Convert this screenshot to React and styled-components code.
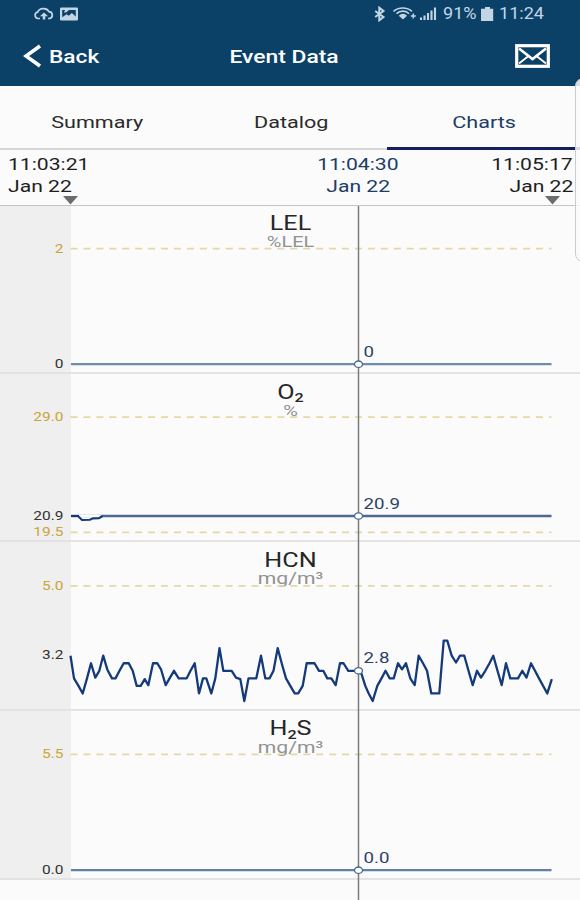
import styled, { createGlobalStyle } from 'styled-components';

const GlobalStyle = createGlobalStyle`
  * {
    box-sizing: border-box;
  }

  body {
    margin: 0;
    background-color: #fbfbfb;
    font-family: Roboto, "Liberation Sans", sans-serif;
  }
`;

const STRETCH = 1.29;
const PLOT_LEFT = 71;
const PLOT_RIGHT = 551.5;
const CURSOR_X = 358.5;

const Screen = styled.div`
  position: relative;
  width: 580px;
  height: 900px;
  overflow: hidden;
  display: flex;
  flex-direction: column;
`;

const StatusBar = styled.div`
  display: flex;
  align-items: center;
  justify-content: space-between;
  height: 28px;
  padding: 0 35px 0 33px;
  background-color: #0b4167;
  color: #c3d5e4;
`;

const StatusGroup = styled.div`
  display: flex;
  align-items: center;
`;

const StatusText = styled.span`
  display: inline-block;
  width: ${(props) => props.$width}px;
  font-size: 16px;
  line-height: 28px;
  white-space: nowrap;
  transform: scaleX(1.13);
  transform-origin: left center;
`;

const Header = styled.header`
  display: grid;
  grid-template-columns: 1fr auto 1fr;
  align-items: center;
  height: 58px;
  padding: 0 30px 2px 23px;
  background-color: #0b4167;
  color: #fff;
`;

const BackButton = styled.button`
  display: flex;
  align-items: center;
  gap: 7px;
  padding: 0;
  border: none;
  background: none;
  color: inherit;
  font-family: inherit;
`;

const MailButton = styled(BackButton)`
  justify-self: end;
`;

const Wide = styled.span`
  display: inline-block;
  white-space: nowrap;
  transform: scaleX(${(props) => props.$stretch || STRETCH});
  transform-origin: ${(props) => props.$origin || 'center'} center;
`;

const HeaderText = styled(Wide)`
  padding-top: 2px;
  font-size: 18px;
  font-weight: 500;
  line-height: 24px;
`;

const Title = styled.h1`
  margin: 0;
  padding-right: 5px;
  display: flex;
`;

const Tabs = styled.nav`
  display: grid;
  grid-template-columns: 194px 193px 193px;
  height: 64px;
`;

const Tab = styled.div`
  display: flex;
  align-items: center;
  justify-content: center;
  padding: ${(props) => (props.$active ? 10 : 9)}px 0 0 1px;
  font-size: 17px;
  color: ${(props) => (props.$active ? '#1d3c66' : '#2a2a2a')};
  border-bottom: ${(props) => (props.$active ? '3px solid #14205f' : '2px solid #d6d6d6')};
`;

const TimeRange = styled.div`
  display: grid;
  grid-template-columns: 1fr auto 1fr;
  height: 56px;
  padding: 4px 7px 0 8px;
  border-bottom: 1px solid #c4c4c4;
`;

const Stamp = styled.div`
  display: flex;
  flex-direction: column;
  align-items: ${(props) => props.$align};
  padding-left: ${(props) => props.$indent || 0}px;
  font-size: 16px;
  line-height: 22px;
  color: ${(props) => props.$color || '#1e1e1e'};
`;

const Marker = styled.svg`
  display: block;
  flex: none;
  margin: ${(props) => props.$margin};
`;

const ChartRow = styled.section`
  flex: none;
  height: ${(props) => props.$height}px;
  border-bottom: 2px solid #e3e3e3;
  background: linear-gradient(to right, #efefef 71px, #fbfbfb 71px);

  svg {
    display: block;
    overflow: visible;
  }
`;

const Footer = styled.div`
  flex: 1;
`;

const EdgePanel = styled.div`
  position: absolute;
  top: 78px;
  right: -12px;
  width: 17px;
  height: 184px;
  border: 1px solid #c9ccd0;
  border-radius: 8px;
  background-color: rgba(250, 250, 250, 0.85);
`;

const hcn = [
  [70.5, 2], [74, -1], [78.5, -2], [82.7, -3], [87, -1], [91, 1], [95.3, -0.9], [99.3, 0],
  [103.2, 2], [107.5, 0.1], [112, -1], [115.5, -1], [119.5, 0], [123.7, 1], [128.7, 1],
  [132.7, 0], [136.7, -2], [140.7, -2], [144.7, -1.1], [148.3, -1.9], [153, 1], [157.3, 1],
  [161, 0.2], [165.7, -1.9], [170, -0.9], [174, 0], [178.7, -1], [186.7, -1], [190.5, 0],
  [194.7, 1], [199, -3], [203, -1], [206.3, -1], [211.3, -3], [215.3, -1], [219.5, 3],
  [223.3, 0], [231.7, 0], [236, -0.9], [240.3, -1.1], [244.3, -4], [248.5, -1], [256.3, -1],
  [261, 2], [265.3, -1], [269.5, -1], [273.5, 0], [277.7, 3], [281.7, 1], [286, -1],
  [290.3, -2], [294.7, -3], [298.2, -3], [302.7, -2], [306.7, 1], [314.5, 1], [319, 0],
  [323.3, 0], [327.3, -1], [331.3, -1], [335.7, -1.9], [340, 1], [343.5, 1], [348.3, 0],
  [358.5, 0], [361.5, -0.4], [365.3, -2], [368.7, -3], [372.7, -4], [377.3, -2], [381.5, -1],
  [385.5, 0], [389.7, -1], [393.7, -1], [398, 1], [402, 0.2], [406, 1], [410.3, -1],
  [414.7, -1.9], [418.7, 2], [423, 1], [427, 0], [431.3, -3], [439.3, -3], [443.7, 4],
  [447.3, 4], [451.7, 2], [456, 1.1], [460, 2], [464.3, 2], [468.5, 0], [472.7, -1.9],
  [477, 0], [481, -0.9], [485.3, 0], [489.5, 1], [493.3, 2], [497.5, 0], [501.7, -1.9],
  [506, 1], [510.3, -1], [518, -1], [522.3, 0], [526.5, -0.9], [531, 1], [535, 0],
  [539, -1], [547.3, -3], [551.8, -1.1],
].map(([x, level]) => [x, 128.8 - level * 7.55]);

const flat = (y) => [[PLOT_LEFT, y], [PLOT_RIGHT, y]];

const charts = [
  {
    id: 'lel',
    height: 168,
    title: 'LEL',
    titleY: 24,
    unit: '%LEL',
    unitY: 41,
    unitSize: 15.5,
    limits: [{ y: 42.6, label: '2' }],
    axis: { y: 158, label: '0' },
    points: flat(158.2),
    stroke: '#6f8cad',
    value: { y: 158.2, textY: 150, label: '0' },
  },
  {
    id: 'o2',
    height: 168,
    title: 'O',
    titleY: 24.5,
    sub: '2',
    unit: '%',
    unitY: 42,
    unitSize: 15.5,
    limits: [{ y: 43.2, label: '29.0' }, { y: 158.3, label: '19.5' }],
    axis: { y: 141.6, label: '20.9' },
    points: flat(142),
    dip: '71,142 78,142 82,146 90,145.8 93,144.4 99,144.2 102.5,142',
    stroke: '#4a6899',
    value: { y: 142, textY: 134, label: '20.9' },
  },
  {
    id: 'hcn',
    height: 169,
    title: 'HCN',
    titleY: 25,
    unit: 'mg/m³',
    unitY: 42.3,
    unitSize: 16.4,
    limits: [{ y: 43.8, label: '5.0' }],
    axis: { y: 113, label: '3.2' },
    points: hcn,
    stroke: '#143a7a',
    value: { y: 128.8, textY: 120.5, label: '2.8' },
  },
  {
    id: 'h2s',
    height: 169,
    title: 'H',
    titleY: 24.3,
    sub: '2',
    tail: 'S',
    unit: 'mg/m³',
    unitY: 42.3,
    unitSize: 16.4,
    limits: [{ y: 43.4, label: '5.5' }],
    axis: { y: 158.8, label: '0.0' },
    points: flat(159.2),
    stroke: '#6480a8',
    value: { y: 159.2, textY: 151, label: '0.0' },
  },
];

function Label({ x, y, children, ...rest }) {
  return (
    <text transform={`translate(${x} ${y}) scale(${STRETCH} 1)`} {...rest}>
      {children}
    </text>
  );
}

function Chart({ chart }) {
  const { title, titleY, sub, tail, unit, unitY, unitSize, limits, axis, points, dip, stroke, value } = chart;

  return (
    <ChartRow $height={chart.height}>
      <svg width="580" height={chart.height - 2}>
        <Label x={290.5} y={titleY} fontSize="19.5" fill="#262626" textAnchor="middle">
          {title}
          {sub && <tspan fontSize="12.5" fontWeight="500" dy="3.5">{sub}</tspan>}
          {tail && <tspan dy="-3.5">{tail}</tspan>}
        </Label>
        <Label x={290.5} y={unitY} fontSize={unitSize} fill="#929292" textAnchor="middle">{unit}</Label>

        {limits.map((limit) => (
          <g key={limit.label}>
            <line
              x1={PLOT_LEFT - 0.5}
              x2={PLOT_RIGHT}
              y1={limit.y}
              y2={limit.y}
              stroke="#e4d9a4"
              strokeWidth="1.8"
              strokeDasharray="7 5.93"
            />
            <Label x={63.5} y={limit.y + 4} fontSize="12" fill="#c8a53a" textAnchor="end">
              {limit.label}
            </Label>
          </g>
        ))}
        <Label x={63.5} y={axis.y + 4} fontSize="12" fill="#333" textAnchor="end">{axis.label}</Label>

        <line x1={CURSOR_X} x2={CURSOR_X} y1="0" y2={chart.height} stroke="#7b7b7b" strokeWidth="1.5" />
        <polyline
          points={points.map((p) => p.join(',')).join(' ')}
          fill="none"
          stroke={stroke}
          strokeWidth="2.3"
          strokeLinejoin="round"
        />
        {dip && (
          <g>
            <line x1="79" x2="101.5" y1="142" y2="142" stroke="#fbfbfb" strokeWidth="3" />
            <polyline points={dip} fill="none" stroke="#143a7a" strokeWidth="2.1" />
          </g>
        )}
        <ellipse cx={CURSOR_X} cy={value.y} rx="4" ry="3.2" fill="#fff" stroke="#48688f" strokeWidth="1.3" />
        <Label x={363.5} y={value.textY + 0.5} fontSize="14.5" fill="#2b4168">{value.label}</Label>
      </svg>
    </ChartRow>
  );
}

function Triangle({ margin }) {
  return (
    <Marker $margin={margin} width="15" height="9">
      <path d="M0 0h15L7.5 8.5z" fill="#6c6c6c" />
    </Marker>
  );
}

export default function App() {
  return (
    <Screen>
      <GlobalStyle />
      <StatusBar>
        <StatusGroup>
          <svg width="22" height="14" viewBox="0 0 22 14" fill="none" stroke="currentColor" strokeWidth="1.7">
            <path d="M7 11.5H5A3.2 3.2 0 0 1 4.6 5.2 6.1 5.1 0 0 1 16 4.6a3.5 3.5 0 0 1 .6 6.9H15" />
            <path d="M11 12.5V7" strokeWidth="2.6" />
            <path d="M7 9.3 11 5.5l4 3.8z" fill="currentColor" stroke="none" />
          </svg>
          <svg width="23" height="14" viewBox="0 0 23 14">
            <rect x="5" y="0.5" width="18" height="13" rx="1.2" fill="#c3d5e4" />
            <path d="M7.2 3h13.6v6.4l-4-3.4-3 2.7-2.2-1.5-4.4 3z" fill="#0b4167" />
            <path d="M10 3h4l-3 2.6H9z" fill="#c3d5e4" />
          </svg>
        </StatusGroup>
        <StatusGroup>
          <svg width="70" height="16" viewBox="0 0 70 16" fill="none" stroke="currentColor">
            <path d="M2.2 5 10.5 11 6.3 14.3V1.7L10.5 5l-8.3 6" strokeWidth="2" />
            <path d="M20.5 5.5C25.5 0.8 34 0.8 39 5.5" strokeWidth="1.7" />
            <path d="M23.5 7.7C27 4.3 33 4.3 36 7.7" strokeWidth="1.7" />
            <path d="M26.3 9.8C28.5 7.8 31.5 7.8 33.5 9.8L30 13z" fill="currentColor" strokeWidth="1" />
            <path d="M40.3 7.5v5M37.8 10h5" strokeWidth="1.5" />
            <path d="M48 14v-2.5M51.5 14V9.5M55 14V7M58.5 14V4.5M62 14V1.5" strokeWidth="2.1" />
          </svg>
          <StatusText $width={38}>91%</StatusText>
          <svg width="18" height="14" viewBox="0 0 18 14" fill="currentColor">
            <path d="M4 0h5v1.7h3.2V14H0V1.7h4z" />
          </svg>
          <StatusText $width={46}>11:24</StatusText>
        </StatusGroup>
      </StatusBar>

      <Header>
        <BackButton>
          <svg width="19" height="24" viewBox="0 0 19 24" fill="none" stroke="#fff" strokeWidth="3.6">
            <path d="M17 2 3 12l14 10" />
          </svg>
          <HeaderText $origin="left" $stretch={1.26}>Back</HeaderText>
        </BackButton>
        <Title><HeaderText $stretch={1.27}>Event Data</HeaderText></Title>
        <MailButton aria-label="Mail">
          <svg width="35" height="24" viewBox="0 0 35 24" fill="none" stroke="#fff">
            <rect x="1.7" y="1.7" width="31.6" height="20.6" strokeWidth="3.2" />
            <path d="M4 4.5 17.5 15 31 4.5" strokeWidth="2.6" />
            <path d="M4 19.5 13.5 12M31 19.5 21.5 12" strokeWidth="1.8" />
          </svg>
        </MailButton>
      </Header>

      <Tabs>
        <Tab><Wide $stretch={1.27}>Summary</Wide></Tab>
        <Tab><Wide $stretch={1.27}>Datalog</Wide></Tab>
        <Tab $active><Wide $stretch={1.27}>Charts</Wide></Tab>
      </Tabs>

      <TimeRange>
        <Stamp $align="flex-start">
          <Wide $origin="left" $stretch={1.32}>11:03:21</Wide>
          <Wide $origin="left" $stretch={1.32}>Jan 22</Wide>
          <Triangle margin="-2px 0 0 55px" />
        </Stamp>
        <Stamp $align="center" $indent={135} $color="#1d3c66">
          <Wide $stretch={1.32}>11:04:30</Wide>
          <Wide $stretch={1.32}>Jan 22</Wide>
        </Stamp>
        <Stamp $align="flex-end">
          <Wide $origin="right" $stretch={1.32}>11:05:17</Wide>
          <Wide $origin="right" $stretch={1.32}>Jan 22</Wide>
          <Triangle margin="-2px 13px 0 0" />
        </Stamp>
      </TimeRange>

      {charts.map((chart) => (
        <Chart key={chart.id} chart={chart} />
      ))}
      <Footer>
        <svg width="580" height="20" display="block">
          <line x1={CURSOR_X} x2={CURSOR_X} y1="0" y2="20" stroke="#7b7b7b" strokeWidth="1.5" />
        </svg>
      </Footer>
      <EdgePanel />
    </Screen>
  );
}
